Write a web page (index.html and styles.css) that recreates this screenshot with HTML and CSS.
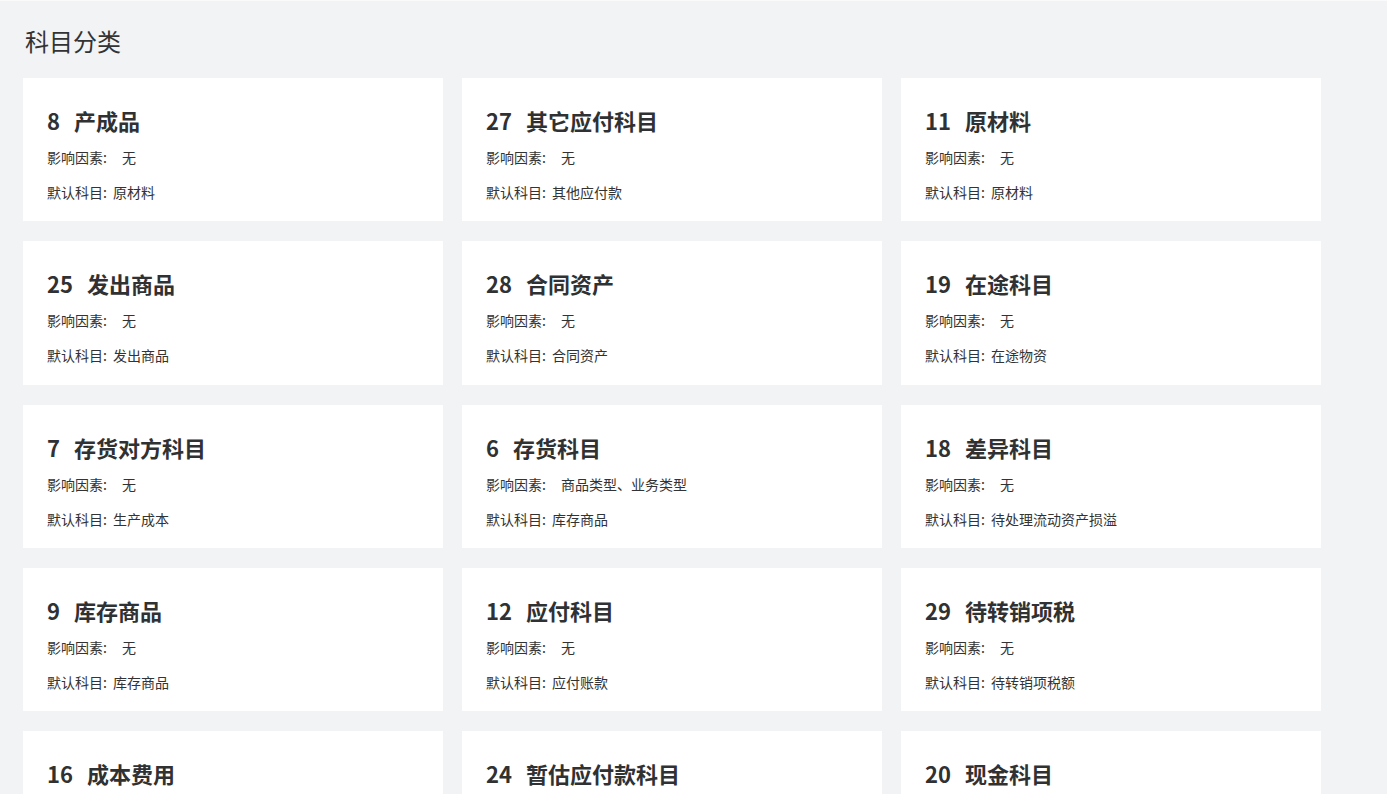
FILE: index.html
```html
<!DOCTYPE html>
<html lang="zh-CN">
<head>
<meta charset="utf-8">
<title>科目分类</title>
<link rel="stylesheet" href="styles.css">
</head>
<body>
<div class="page">
  <h1 class="page-title">科目分类</h1>
  <div class="grid">
    <div class="card"><div class="card-title"><span class="num">8</span>产成品</div><div class="row">影响因素:<span class="val">无</span></div><div class="row">默认科目:<span class="def">原材料</span></div></div>
    <div class="card"><div class="card-title"><span class="num">27</span>其它应付科目</div><div class="row">影响因素:<span class="val">无</span></div><div class="row">默认科目:<span class="def">其他应付款</span></div></div>
    <div class="card"><div class="card-title"><span class="num">11</span>原材料</div><div class="row">影响因素:<span class="val">无</span></div><div class="row">默认科目:<span class="def">原材料</span></div></div>

    <div class="card"><div class="card-title"><span class="num">25</span>发出商品</div><div class="row">影响因素:<span class="val">无</span></div><div class="row">默认科目:<span class="def">发出商品</span></div></div>
    <div class="card"><div class="card-title"><span class="num">28</span>合同资产</div><div class="row">影响因素:<span class="val">无</span></div><div class="row">默认科目:<span class="def">合同资产</span></div></div>
    <div class="card"><div class="card-title"><span class="num">19</span>在途科目</div><div class="row">影响因素:<span class="val">无</span></div><div class="row">默认科目:<span class="def">在途物资</span></div></div>

    <div class="card"><div class="card-title"><span class="num">7</span>存货对方科目</div><div class="row">影响因素:<span class="val">无</span></div><div class="row">默认科目:<span class="def">生产成本</span></div></div>
    <div class="card"><div class="card-title"><span class="num">6</span>存货科目</div><div class="row">影响因素:<span class="val">商品类型、业务类型</span></div><div class="row">默认科目:<span class="def">库存商品</span></div></div>
    <div class="card"><div class="card-title"><span class="num">18</span>差异科目</div><div class="row">影响因素:<span class="val">无</span></div><div class="row">默认科目:<span class="def">待处理流动资产损溢</span></div></div>

    <div class="card"><div class="card-title"><span class="num">9</span>库存商品</div><div class="row">影响因素:<span class="val">无</span></div><div class="row">默认科目:<span class="def">库存商品</span></div></div>
    <div class="card"><div class="card-title"><span class="num">12</span>应付科目</div><div class="row">影响因素:<span class="val">无</span></div><div class="row">默认科目:<span class="def">应付账款</span></div></div>
    <div class="card"><div class="card-title"><span class="num">29</span>待转销项税</div><div class="row">影响因素:<span class="val">无</span></div><div class="row">默认科目:<span class="def">待转销项税额</span></div></div>

    <div class="card"><div class="card-title"><span class="num">16</span>成本费用</div><div class="row">影响因素:<span class="val">无</span></div><div class="row">默认科目:<span class="def">主营业务成本</span></div></div>
    <div class="card"><div class="card-title"><span class="num">24</span>暂估应付款科目</div><div class="row">影响因素:<span class="val">无</span></div><div class="row">默认科目:<span class="def">应付账款</span></div></div>
    <div class="card"><div class="card-title"><span class="num">20</span>现金科目</div><div class="row">影响因素:<span class="val">无</span></div><div class="row">默认科目:<span class="def">库存现金</span></div></div>
  </div>
</div>
</body>
</html>
```

FILE: styles.css
```css
html, body {
  margin: 0;
  padding: 0;
  background: #f2f3f5;
  height: 100%;
  overflow: hidden;
}
body {
  font-family: "Noto Sans CJK SC", "Noto Sans", sans-serif;
  color: #333;
  border-top: 1px solid #fafafa;
}
.page {
  padding: 24px 0 0 23px;
}
.page-title {
  margin: 0 0 21px 2px;
  font-size: 24px;
  line-height: 32px;
  font-weight: 400;
  color: #333;
}
.grid {
  display: grid;
  grid-template-columns: repeat(3, 420px);
  column-gap: 19px;
  row-gap: 20px;
}
.card {
  background: #fff;
  padding: 28px 24px 0;
  height: 143.33px;
  box-sizing: border-box;
}
.card-title {
  font-size: 22px;
  line-height: 28px;
  font-weight: 700;
  color: #303133;
  margin-bottom: 13px;
}
.num {
  margin-right: 14px;
}
.row {
  font-size: 14px;
  line-height: 20px;
  color: #333;
}
.row + .row {
  margin-top: 15px;
}
.val {
  margin-left: 15px;
}
.def {
  margin-left: 6px;
}
```
